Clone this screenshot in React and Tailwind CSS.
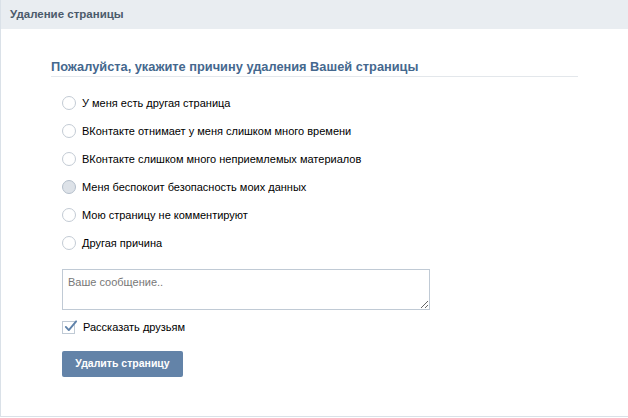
const reasons = [
  "У меня есть другая страница",
  "ВКонтакте отнимает у меня слишком много времени",
  "ВКонтакте слишком много неприемлемых материалов",
  "Меня беспокоит безопасность моих данных",
  "Мою страницу не комментируют",
  "Другая причина",
];

function Radio({ label, hover }) {
  return (
    <label className="flex items-center h-[28px] cursor-pointer">
      <span
        className={
          "w-[14px] h-[14px] rounded-full border shrink-0 " +
          (hover ? "bg-[#dde2e8] border-[#b4bfcb]" : "bg-white border-[#c3cbd4]")
        }
      />
      <span className="ml-[6px] text-[11px] text-black leading-none">{label}</span>
    </label>
  );
}

export default function App() {
  return (
    <div className="w-[628px] h-[418px] bg-white font-['Liberation_Sans',Arial,sans-serif]">
      <div className="h-[417px] border-l border-b border-[#dae1e8] flex flex-col">
        <div className="h-[29px] bg-[#e9edf1] flex items-center px-[9px]">
          <span className="text-[11.5px] font-bold text-[#4b5a6b]">Удаление страницы</span>
        </div>
        <div className="px-[50px] flex flex-col">
          <div className="mt-[31px] h-[16px] border-b border-[#e3e7eb] box-content">
            <h2 className="text-[12.8px] font-bold text-[#45688e] leading-[16px] -mt-[1px]">
              Пожалуйста, укажите причину удаления Вашей страницы
            </h2>
          </div>
          <div className="pl-[11px] mt-[12px] flex flex-col">
            {reasons.map((r, i) => (
              <Radio key={r} label={r} hover={i === 3} />
            ))}
            <textarea
              placeholder="Ваше сообщение.."
              className="mt-[12px] w-[368px] h-[41px] border border-[#c0cad5] px-[5px] py-[4px] text-[11px] text-black placeholder:text-[#777] outline-none"
            />
            <label className="mt-[10px] h-[14px] flex items-center">
              <span className="relative w-[13px] h-[13px] border border-[#c0cad5] bg-white shrink-0">
                <svg
                  viewBox="0 0 16 16"
                  className="absolute -top-[3px] left-[0px] w-[15px] h-[15px]"
                >
                  <path
                    d="M3 8.5 L6.2 11.8 L14 2.5"
                    fill="none"
                    stroke="#5f82aa"
                    strokeWidth="2"
                    strokeLinecap="round"
                    strokeLinejoin="round"
                  />
                </svg>
              </span>
              <span className="ml-[8px] text-[11px] text-black">Рассказать друзьям</span>
            </label>
            <button className="mt-[17px] w-[121px] h-[26px] rounded-[2px] bg-[#6383a8] text-white text-[10.5px] font-bold">
              Удалить страницу
            </button>
          </div>
        </div>
      </div>
    </div>
  );
}
